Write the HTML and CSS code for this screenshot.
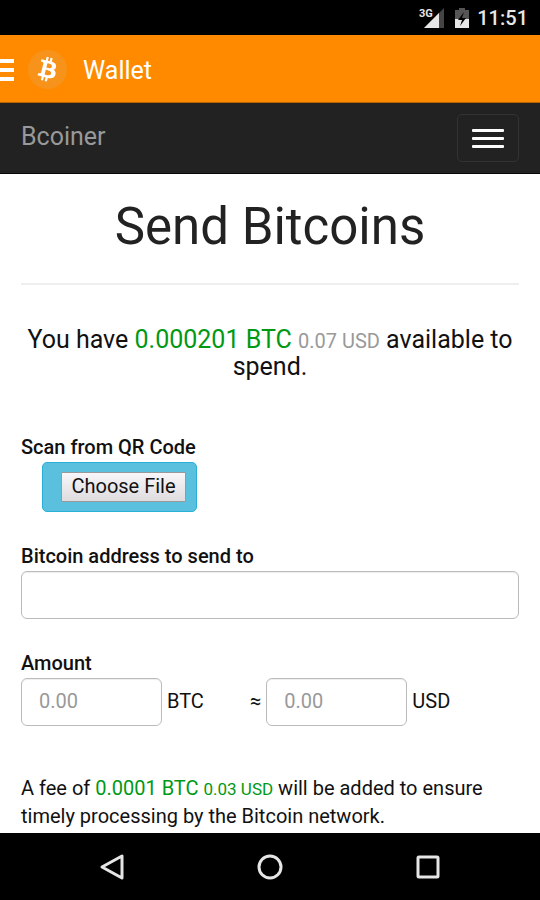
FILE: index.html
```html
<!DOCTYPE html>
<html lang="en">
<head>
<meta charset="utf-8">
<meta name="viewport" content="width=device-width, initial-scale=1">
<title>Bcoiner Wallet</title>
<link rel="stylesheet" href="styles.css">
</head>
<body>
<div class="status-bar">
  <svg class="signal" width="26" height="22" viewBox="0 0 26 22" aria-hidden="true">
    <path d="M25 1V21H5Z" fill="#444"/>
    <path d="M20 6V21H5Z" fill="#e6e6e6"/>
    <path d="M0 0H13V9L8 12H0Z" fill="#000"/>
    <text class="signal-type" x="0" y="10">3G</text>
  </svg>
  <svg class="battery" width="14" height="22" viewBox="0 0 14 22" aria-hidden="true">
    <path d="M4 1h6v2h4v9H0V3h4z" fill="#555"/>
    <path d="M0 12h14v9H0z" fill="#e6e6e6"/>
    <path d="M9 5L3 13h4l-2 6 6-8H7z" fill="#000"/>
  </svg>
  <time>11:51</time>
</div>
<header class="app-bar">
  <button class="drawer-button" type="button" aria-label="Open drawer">
    <span></span><span></span><span></span>
  </button>
  <svg class="logo" width="39" height="39" viewBox="0 0 24 24" aria-hidden="true">
    <circle cx="12" cy="12" r="12" fill="#f7931a"/>
    <path fill="#fff" fill-rule="evenodd" d="M17.288 10.291c.24-1.590-.974-2.450-2.640-3.030l.54-2.153-1.315-.33-.525 2.107c-.345-.087-.705-.167-1.064-.25l.526-2.127-1.320-.33-.54 2.165c-.285-.067-.565-.132-.84-.2l-1.815-.45-.35 1.407s.975.225.955.236c.535.136.63.486.615.766l-1.477 5.920c-.075.166-.24.406-.614.314.015.02-.96-.24-.96-.24l-.66 1.510 1.710.426.93.242-.54 2.190 1.320.327.54-2.170c.36.1.705.19 1.050.273l-.51 2.154 1.320.33.545-2.190c2.240.427 3.930.257 4.640-1.774.57-1.637-.03-2.580-1.217-3.196.854-.193 1.500-.76 1.680-1.930zM14.278 14.511c-.404 1.640-3.157.75-4.050.53l.72-2.900c.896.23 3.757.67 3.330 2.370zM14.688 10.271c-.37 1.490-2.662.735-3.405.55l.654-2.640c.744.18 3.137.524 2.750 2.090z"/>
  </svg>
  <span class="app-title">Wallet</span>
</header>
<nav class="site-nav">
  <a class="brand" href="#">Bcoiner</a>
  <button class="menu-button" type="button" aria-label="Toggle navigation">
    <span></span><span></span><span></span>
  </button>
</nav>
<main class="content">
  <h1>Send Bitcoins</h1>
  <hr>
  <p class="balance">You have <span class="money">0.000201 BTC</span> <small>0.07 USD</small> available to spend.</p>
  <form>
    <div class="field">
      <label for="qr">Scan from QR Code</label>
      <div class="file-box"><input id="qr" type="file" accept="image/*"></div>
    </div>
    <div class="field">
      <label for="address">Bitcoin address to send to</label>
      <input class="text-box" id="address" type="text">
    </div>
    <div class="field">
      <label for="btc">Amount</label>
      <div class="amounts">
        <div class="amount">
          <input class="text-box" id="btc" type="text" placeholder="0.00">
          <span>BTC</span>
        </div>
        <div class="amount">
          <span>≈</span>
          <input class="text-box" id="usd" type="text" placeholder="0.00" aria-labelledby="usd-label">
          <label class="unit" id="usd-label" for="usd">USD</label>
        </div>
      </div>
    </div>
    <p class="fee">A fee of <span class="money">0.0001 BTC <small>0.03 USD</small></span> will be added to ensure timely processing by the Bitcoin network.</p>
  </form>
</main>
<footer class="system-nav">
  <button type="button" aria-label="Back">
    <svg width="28" height="28" viewBox="0 0 28 28"><path d="M24 3V25L4 14Z"/></svg>
  </button>
  <button type="button" aria-label="Home">
    <svg width="28" height="28" viewBox="0 0 28 28"><circle cx="14" cy="14" r="11"/></svg>
  </button>
  <button type="button" aria-label="Recent apps">
    <svg width="28" height="28" viewBox="0 0 28 28"><rect x="4" y="4" width="20" height="20" rx="1"/></svg>
  </button>
</footer>
</body>
</html>
```
FILE: styles.css
```css
* { box-sizing: border-box; }

body {
  margin: 0;
  height: 100vh;
  display: flex;
  flex-direction: column;
  background: #fff;
  color: #111;
  font: 20px/28px Roboto, sans-serif;
}

button {
  padding: 0;
  border: 0;
  background: none;
}

small { line-height: 1; }

.status-bar {
  flex: none;
  display: flex;
  align-items: center;
  justify-content: flex-end;
  height: 35px;
  padding: 0 12px;
  background: #000;
  color: #e6e6e6;
  font-size: 20px;
  font-weight: 500;
}

.signal { margin-right: 10px; }
.battery { margin-right: 8px; }

.signal-type {
  fill: #e6e6e6;
  font: 700 11px Roboto, sans-serif;
}

.app-bar {
  flex: none;
  display: flex;
  align-items: center;
  height: 68px;
  padding-top: 2px;
  background: #ff8a00;
  border-bottom: 1px solid #b86400;
  color: #fff;
  font-size: 25px;
}

.app-title { padding-top: 2px; }

.drawer-button {
  display: flex;
  flex-direction: column;
  gap: 5px;
  width: 14px;
  margin-right: 14px;
}

.drawer-button span {
  width: 100%;
  height: 4px;
  background: #fff;
}

.logo { margin-right: 16px; }

.site-nav {
  flex: none;
  display: flex;
  align-items: center;
  justify-content: space-between;
  height: 71px;
  padding: 0 21px;
  background: #222;
  border-bottom: 1px solid #080808;
}

.brand {
  padding-bottom: 2px;
  color: #999;
  font-size: 25px;
  text-decoration: none;
}

.menu-button {
  display: flex;
  flex-direction: column;
  align-items: center;
  justify-content: center;
  gap: 5px;
  width: 62px;
  height: 48px;
  border: 1px solid #333;
  border-radius: 5px;
}

.menu-button span {
  width: 32px;
  height: 3px;
  border-radius: 1px;
  background: #fff;
}

.content {
  flex: 1;
  min-height: 0;
  overflow: hidden;
  padding: 25px 21px 0;
}

h1 {
  margin: 0 0 28px;
  color: #222;
  font-size: 51px;
  font-weight: 400;
  line-height: 56px;
  text-align: center;
}

hr {
  height: 2px;
  margin: 0 0 41px;
  border: 0;
  background: #eee;
}

.balance {
  margin: 0 0 53px;
  font-size: 25px;
  line-height: 27px;
  text-align: center;
}

.money { color: #009914; }

.balance small {
  color: #999;
  font-size: 20px;
}

.field { margin-bottom: 30px; }

.field label {
  display: block;
  margin-bottom: 1px;
  font-weight: 500;
}

.file-box {
  width: fit-content;
  margin-left: 21px;
  padding: 9px 10px 9px 18px;
  background: #5bc0de;
  border: 1px solid #28b0d8;
  border-radius: 5px;
}

.file-box input {
  display: block;
  width: 125px;
  height: 30px;
  color: transparent;
  font: 20px/24px Roboto, sans-serif;
}

.file-box input::file-selector-button {
  width: 125px;
  height: 30px;
  margin: 0;
  padding: 0 0 2px;
  background: linear-gradient(#f8f6f8, #dedcde);
  border: 1px solid #999;
  border-radius: 1px;
  color: #111;
  font: 20px/24px Roboto, sans-serif;
}

.text-box {
  display: block;
  width: 100%;
  height: 48px;
  padding: 0 17px 2px;
  background: #fff;
  border: 1px solid #bbb;
  border-radius: 6px;
  box-shadow: inset 0 1px 1px #eee;
  color: #555;
  font: 20px Roboto, sans-serif;
}

.text-box::placeholder { color: #999; }

.amounts { display: flex; }

.amount {
  flex: 1;
  display: flex;
  align-items: center;
  gap: 5px;
}

.amount:first-child { flex: 0 0 46%; }
.amount .text-box { width: 141px; }
.amount span, .amount label { padding-bottom: 2px; }

.field .unit {
  margin: 0;
  font-weight: 400;
}

.fee { margin: 48px 0 0; }
.fee small { font-size: 17px; }

.system-nav {
  flex: none;
  display: flex;
  justify-content: center;
  gap: 130px;
  height: 67px;
  background: #000;
}

.system-nav svg {
  display: block;
  fill: none;
  stroke: #e6e6e6;
  stroke-width: 3;
  stroke-linejoin: round;
}
```
